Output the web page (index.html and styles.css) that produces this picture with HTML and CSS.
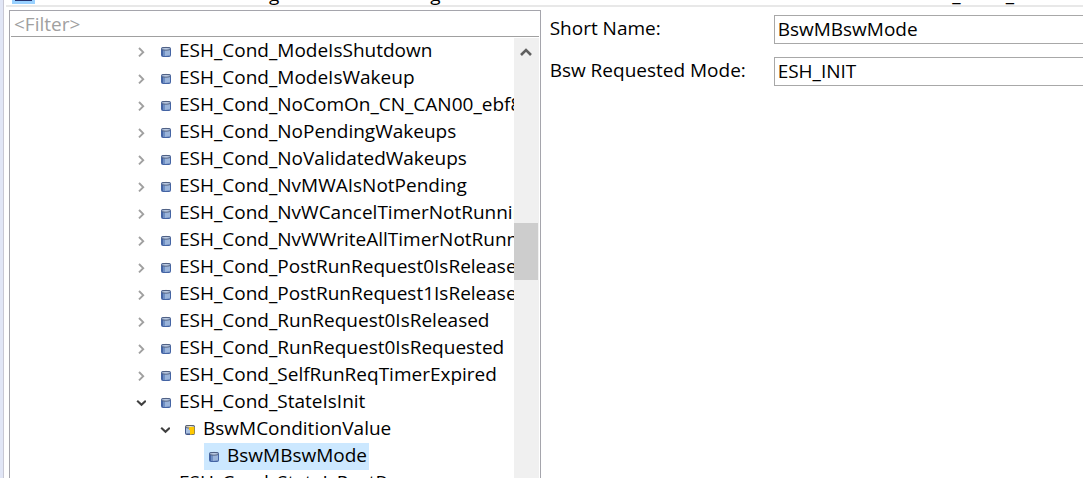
FILE: index.html
```html
<!DOCTYPE html>
<html lang="en">
<head>
    <meta charset="UTF-8">
    <meta name="viewport" content="width=device-width, initial-scale=1.0">
    <title>BswMBswMode</title>
    <link rel="stylesheet" href="styles.css">
</head>
<body>
    <svg class="defs" aria-hidden="true">
        <symbol id="closed" viewBox="0 0 10 12">
            <path d="M3 2 L7.2 6.2 L3 10.4" fill="none" stroke="#a0a0a0" stroke-width="1.9"/>
        </symbol>
        <symbol id="open" viewBox="0 0 10 12">
            <path d="M1.2 3.8 L5.5 7.8 L9.8 3.8" fill="none" stroke="#404040" stroke-width="2.1"/>
        </symbol>
        <symbol id="param" viewBox="0 0 12 12">
            <rect x="1" y="1" width="10" height="10" rx="2" fill="#4464a4"/>
            <path d="M5 4 H10 V9.5 L5 10 Z" fill="#9ab4da"/>
            <rect x="3" y="4" width="2" height="6" fill="#6f8fc4"/>
            <ellipse cx="6" cy="2.8" rx="4.4" ry="1.4" fill="#b9cae4" stroke="#4c5a78" stroke-width=".9"/>
        </symbol>
        <symbol id="value" viewBox="0 0 12 12">
            <rect x="1" y="1" width="10" height="10" rx="2" fill="#3f5488"/>
            <rect x="2" y="4" width="4" height="5.5" fill="#a9c0e0"/>
            <ellipse cx="6" cy="2.8" rx="4.4" ry="1.3" fill="#e9e4cc" stroke="#555860" stroke-width=".9"/>
            <path d="M5 4 L6 3 H10.5 V10 L6 10.8 V6 H5 Z" fill="#ffc800"/>
        </symbol>
    </svg>

    <div class="window">
        <div class="edge"></div>
        <div class="editor">
            <header class="title">
                <span class="title-icon"></span>
                <span class="title-first">g</span>
                <span class="title-second">g</span>
                <span class="title-path">_</span>
                <span class="title-end">_</span>
            </header>
            <main class="content">
                <section class="outline">
                    <input class="filter" type="text" placeholder="&lt;Filter&gt;" aria-label="Filter">
                    <div class="tree-area">
                        <ul class="tree" id="tree"></ul>
                        <div class="scrollbar">
                            <svg class="scroll-up" viewBox="0 0 12 10"><path d="M1 8 L6 3 L11 8" fill="none" stroke="#606060" stroke-width="2.6"/></svg>
                            <div class="thumb"></div>
                        </div>
                    </div>
                </section>
                <form class="details">
                    <label for="shortName">Short Name:</label>
                    <input class="field" type="text" id="shortName" value="BswMBswMode">
                    <label for="requestedMode">Bsw Requested Mode:</label>
                    <input class="field" type="text" id="requestedMode" value="ESH_INIT">
                </form>
            </main>
        </div>
    </div>

    <script src="tree.js"></script>
</body>
</html>
```
FILE: styles.css
```css
* {
    box-sizing: border-box;
}
body {
    margin: 0;
    font-family: "Open Sans", "Noto Sans", sans-serif;
    font-size: 19px;
    line-height: 25px;
    color: #000;
    background-color: #fff;
}
.defs {
    display: none;
}
.window {
    display: flex;
    height: 100vh;
    overflow: hidden;
}
.edge {
    width: 4px;
    background-color: #e1e6f6;
    border-right: 1px solid #c8c8d4;
}
.editor {
    flex: 1;
    min-width: 0;
    display: flex;
    flex-direction: column;
    padding-left: 2px;
}
.title {
    display: flex;
    align-items: flex-end;
    height: 7px;
    padding-left: 6px;
    border-bottom: 2px solid #e8e8e8;
    line-height: 22px;
    overflow: hidden;
}
.title span {
    flex: none;
}
.title-icon {
    width: 23px;
    height: 4px;
    margin-bottom: 1px;
    border: 3px solid #99d1ff;
    border-top: 0;
    background-color: #26326e;
}
.title-icon + .title-first {
    margin-left: 234px;
}
.title-second {
    margin-left: 151px;
}
.title-path {
    margin-left: auto;
}
.title-end {
    margin: 0 69px 0 45px;
}
.content {
    flex: 1;
    min-height: 0;
    display: flex;
    padding-left: 3px;
}
.outline {
    flex: 0 0 49.5%;
    min-width: 0;
    display: flex;
    flex-direction: column;
    margin-top: 3px;
    padding: 0 1px;
    border: 1px solid #a5a5ac;
    border-bottom: 0;
}
.filter {
    height: 26px;
    padding: 0 3px;
    border: 0;
    border-bottom: 1px solid #a0a0a0;
    font: inherit;
    outline: none;
}
.filter::placeholder {
    color: #a0a0a0;
    opacity: 1;
}
.tree-area {
    flex: 1;
    min-height: 0;
    display: flex;
    margin-top: 1px;
}
.tree {
    flex: 1;
    min-width: 0;
    margin: 0;
    padding: 0 0 0 123px;
    list-style: none;
    overflow: hidden;
}
.tree ul {
    margin: 0;
    padding: 0 0 0 24px;
    list-style: none;
}
.row {
    display: flex;
    align-items: center;
    height: 27px;
    white-space: nowrap;
}
.arrow {
    flex: none;
    width: 10px;
    height: 12px;
    margin: 0 10px 0 2px;
}
.item {
    display: flex;
    align-items: center;
    height: 27px;
    padding: 0 2px 0 4px;
}
.item svg {
    flex: none;
    width: 12px;
    height: 12px;
    margin-right: 7px;
}
.name {
    padding-bottom: 2px;
}
.selected {
    background-color: #cce8ff;
}
.scrollbar {
    flex: none;
    width: 25px;
    background-color: #f0f0f0;
}
.scroll-up {
    display: block;
    width: 12px;
    height: 10px;
    margin: 9px auto 166px;
}
.thumb {
    height: 57px;
    margin-right: 1px;
    background-color: #cdcdcd;
}
.details {
    flex: 1;
    display: grid;
    grid-template-columns: 224px 1fr;
    grid-auto-rows: 29px;
    row-gap: 13px;
    align-items: center;
    align-content: start;
    padding: 8px 0 0 9px;
}
.details label {
    padding-bottom: 2px;
}
.field {
    width: 100%;
    height: 29px;
    padding: 0 3px 2px;
    border: 1px solid #a8a8a8;
    border-right: 0;
    font: inherit;
    outline: none;
}
```
FILE: tree.js
```js
const nodes = [
    { name: 'ESH_Cond_ModeIsShutdown', arrow: 'closed' },
    { name: 'ESH_Cond_ModeIsWakeup', arrow: 'closed' },
    { name: 'ESH_Cond_NoComOn_CN_CAN00_ebf8', arrow: 'closed' },
    { name: 'ESH_Cond_NoPendingWakeups', arrow: 'closed' },
    { name: 'ESH_Cond_NoValidatedWakeups', arrow: 'closed' },
    { name: 'ESH_Cond_NvMWAIsNotPending', arrow: 'closed' },
    { name: 'ESH_Cond_NvWCancelTimerNotRunning', arrow: 'closed' },
    { name: 'ESH_Cond_NvWWriteAllTimerNotRunning', arrow: 'closed' },
    { name: 'ESH_Cond_PostRunRequest0IsReleased', arrow: 'closed' },
    { name: 'ESH_Cond_PostRunRequest1IsReleased', arrow: 'closed' },
    { name: 'ESH_Cond_RunRequest0IsReleased', arrow: 'closed' },
    { name: 'ESH_Cond_RunRequest0IsRequested', arrow: 'closed' },
    { name: 'ESH_Cond_SelfRunReqTimerExpired', arrow: 'closed' },
    { name: 'ESH_Cond_StateIsInit', arrow: 'open', children: [
        { name: 'BswMConditionValue', arrow: 'open', icon: 'value', children: [
            { name: 'BswMBswMode', selected: true }
        ] }
    ] },
    { name: 'ESH_Cond_StateIsPostRun', arrow: 'closed' }
];

function renderNodes(list) {
    return list.map(node => `
        <li>
            <div class="row">
                <svg class="arrow">${node.arrow ? `<use href="#${node.arrow}"/>` : ''}</svg>
                <span class="item ${node.selected ? 'selected' : ''}"><svg><use href="#${node.icon || 'param'}"/></svg><span class="name">${node.name}</span></span>
            </div>
            ${node.children ? `<ul>${renderNodes(node.children)}</ul>` : ''}
        </li>
    `).join('');
}

document.getElementById('tree').innerHTML = renderNodes(nodes);
```
